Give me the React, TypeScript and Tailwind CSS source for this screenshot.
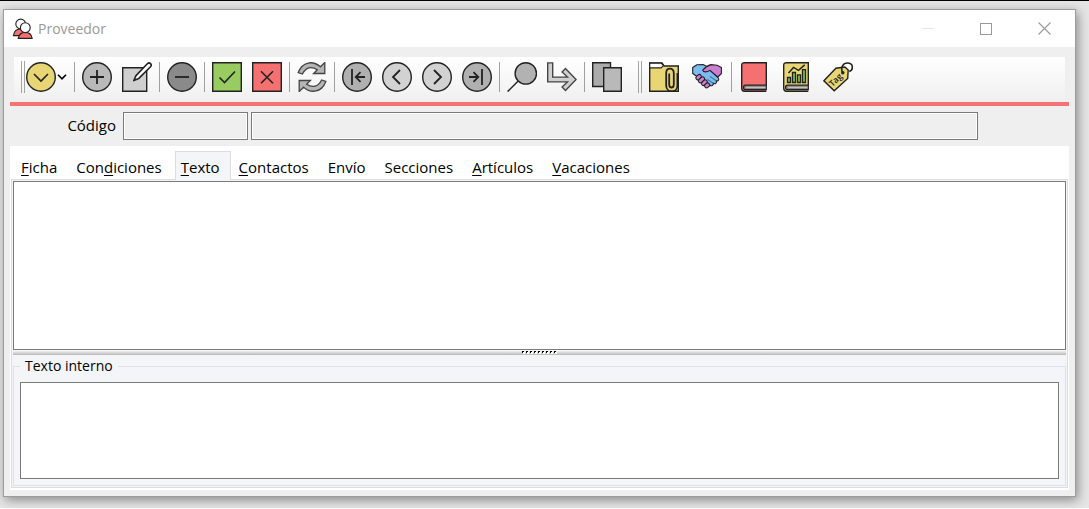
import { useState } from "react";
import type { ReactNode } from "react";

const INK = "#222222";

function Icon({ children }: { children: ReactNode }) {
  return (
    <svg
      viewBox="0 0 30 30"
      className="size-[30px] shrink-0"
      fill="none"
      stroke={INK}
      strokeWidth="1.4"
      aria-hidden="true"
    >
      {children}
    </svg>
  );
}

function ToolButton({ label, children }: { label: string; children: ReactNode }) {
  return (
    <button type="button" aria-label={label} className="flex w-10 shrink-0 items-center justify-center">
      {children}
    </button>
  );
}

function Separator() {
  return (
    <div className="flex w-[5px] shrink-0 justify-center">
      <div className="h-[30px] w-px bg-[#a0a0a0]" />
    </div>
  );
}

function Grip() {
  return <div className="h-8 w-1 shrink-0 border-x border-[#a3a3a3]" />;
}

function Disc({ fill, children }: { fill: string; children: ReactNode }) {
  return (
    <Icon>
      <circle cx="15" cy="15" r="14.3" fill={fill} />
      {children}
    </Icon>
  );
}

function HandshakeIcon() {
  return (
    <Icon>
      <g strokeWidth="1.1" strokeLinejoin="round">
        <path
          d="M.7 5.5 5 2.8 11 2.6 14 4 19 9 26 15.5 C28 18 25.5 19.5 24.3 18.7 C25.3 21.4 22.6 22.4 21.3 21.2 C21.6 23.6 19.3 24.4 17.8 23.2 C17 25 15.5 24.5 14 23 L5 14.5 .7 11.5Z"
          fill="#7cbcf0"
        />
        <path
          d="M29.4 5.5 25 3.2 19 2.6 C15 3.6 13 5.5 10.7 8.2 C11.5 10.4 14.5 10.5 18 8.4 L25.8 15 29.4 11.5Z"
          fill="#cc7fd2"
        />
        <path d="m18 14.5 6.3 4.2M15.5 17.5l5.8 3.7" stroke="#45779f" />
        <rect x="3.6" y="13.2" width="6" height="4" rx="2" fill="#cc7fd2" transform="rotate(-42 6.6 15.2)" />
        <rect x="6" y="15.9" width="7" height="4" rx="2" fill="#cc7fd2" transform="rotate(-42 9.5 17.9)" />
        <rect x="9.2" y="18.7" width="6.4" height="4" rx="2" fill="#cc7fd2" transform="rotate(-42 12.4 20.7)" />
        <rect x="12.4" y="21.4" width="5.4" height="4" rx="2" fill="#cc7fd2" transform="rotate(-42 15.1 23.4)" />
      </g>
    </Icon>
  );
}

function BookIcon({ cover, children }: { cover: string; children?: ReactNode }) {
  return (
    <Icon>
      <path d="M27.3 29.3H5.5C3.5 29.3 2.7 28 2.7 26V3.2C2.7 1.5 3.8.7 5.5.7h21.8v22.6" fill={cover} />
      <path d="M27.3 23.2H6.5c-2.6 0-2.6 4.4 0 4.4h20.8z" fill="#8a8a8a" strokeWidth="1.2" />
      <path d="M7 25.4h19.5" stroke="#c9c9c9" strokeWidth="1" />
      {children}
    </Icon>
  );
}

function Toolbar() {
  return (
    <div
      role="toolbar"
      aria-label="Acciones"
      className="flex h-[43px] items-center bg-linear-to-b from-white to-[#f0f0f0] pb-[3px] pl-[7px]"
    >
      <Grip />
      <button type="button" aria-label="Menú" className="ml-px flex shrink-0 items-center">
        <Disc fill="#e8d574">
          <path d="m8 12 7 7 7-7" strokeWidth="1.6" />
        </Disc>
        <svg viewBox="0 0 10 6" className="mx-1 ml-px h-1.5 w-2.5" fill="none" stroke="#000" strokeWidth="1.6" aria-hidden="true">
          <path d="m1 .8 4 4 4-4" />
        </svg>
      </button>
      <div className="ml-px flex">
        <Separator />
      </div>
      <ToolButton label="Nuevo">
        <Disc fill="#b9b9b9">
          <path d="M15 8v14M8 15h14" strokeWidth="1.8" />
        </Disc>
      </ToolButton>
      <ToolButton label="Editar">
        <Icon>
          <path d="M.7 5.7h24v23.6H.7z" fill="#cfcfcf" />
          <path d="m11.8 18.6 2.2-5L25.3 1.8c2.4-2.2 5.2.8 3.2 3L16.8 16.4z" fill="#fff" strokeWidth="1.6" strokeLinejoin="round" />
        </Icon>
      </ToolButton>
      <Separator />
      <ToolButton label="Eliminar">
        <Disc fill="#8a8a8a">
          <path d="M8 15h14" strokeWidth="1.8" />
        </Disc>
      </ToolButton>
      <Separator />
      <ToolButton label="Aceptar">
        <Icon>
          <path d="M.7.7h28.6v28.6H.7z" fill="#98cc60" />
          <path d="m7.5 15.5 5 5L23 9.5" strokeWidth="1.6" />
        </Icon>
      </ToolButton>
      <ToolButton label="Cancelar">
        <Icon>
          <path d="M.7.7h28.6v28.6H.7z" fill="#f57070" />
          <path d="m9 9.3 12 12m0-12-12 12" strokeWidth="1.6" />
        </Icon>
      </ToolButton>
      <Separator />
      <ToolButton label="Actualizar">
        <Icon>
          <g fill="#b5b5b5" stroke="#444" strokeWidth="1.3">
            <path d="M1.2 10.6C5.5-.8 16-1.6 23.4 4.8l4.4-4.3v11H16.6l3.7-3.7C14.7 4 8.9 4.9 5.4 12z" />
            <path d="M28.8 19.4C24.5 30.8 14 31.6 6.6 25.2l-4.4 4.3v-11h11.2l-3.7 3.7c5.6 3.8 11.4 2.9 14.9-4.2z" />
          </g>
        </Icon>
      </ToolButton>
      <Separator />
      <ToolButton label="Primero">
        <Disc fill="#b0b0b0">
          <path d="M10 7v16M23 15h-9M18.5 10.2 13.7 15l4.8 4.8" strokeWidth="1.8" />
        </Disc>
      </ToolButton>
      <ToolButton label="Anterior">
        <Disc fill="#d2d2d2">
          <path d="m18 8-7 7 7 7" strokeWidth="1.8" />
        </Disc>
      </ToolButton>
      <ToolButton label="Siguiente">
        <Disc fill="#d2d2d2">
          <path d="m12 8 7 7-7 7" strokeWidth="1.8" />
        </Disc>
      </ToolButton>
      <ToolButton label="Último">
        <Disc fill="#b0b0b0">
          <path d="M20 7v16M7 15h9m-4.5-4.8 4.8 4.8-4.8 4.8" strokeWidth="1.8" />
        </Disc>
      </ToolButton>
      <Separator />
      <ToolButton label="Buscar">
        <Icon>
          <circle cx="18.8" cy="11.4" r="10.7" fill="#b2b2b2" />
          <path d="M11.2 19 .6 29.6" />
        </Icon>
      </ToolButton>
      <ToolButton label="Ir a">
        <Icon>
          <path
            d="M.7.9h5v14.2h14.8l-5.4-5.2 3.4-3.4 10.6 11-10.6 11-3.4-3.4 5.4-5.2H.7z"
            fill="#cfcfcf"
            stroke="#444"
          />
        </Icon>
      </ToolButton>
      <Separator />
      <ToolButton label="Copiar">
        <Icon>
          <path d="M.7.7h17.8v23.8H.7z" fill="#ababab" />
          <path d="M11.7 5.7h17.6v23.6H11.7z" fill="#b9b9b9" />
        </Icon>
      </ToolButton>
      <div className="ml-[11px] flex items-center">
        <Grip />
      </div>
      <div className="mx-[2px] flex gap-[3px]">
        <ToolButton label="Documentos">
          <Icon>
            <path d="M.7.9v28.4h28.6V4H15l-2-3.1z" fill="#e8d574" />
            <path d="M.7 1.2h11.5l2.3 2.2-2.3 2.5H.7z" fill="#fff" strokeWidth="1.2" />
            <path
              d="M20.2 11.5v11c0 4 4.6 4 4.6 0V11c0-5.8-7.6-5.8-7.6 0v12.4c0 8 11.2 8 11.2 0V11"
              strokeWidth="1.8"
            />
          </Icon>
        </ToolButton>
        <ToolButton label="Contactos comerciales">
          <HandshakeIcon />
        </ToolButton>
      </div>
      <Separator />
      <div className="flex gap-[2px]">
        <ToolButton label="Libro">
          <BookIcon cover="#f57070" />
        </ToolButton>
        <ToolButton label="Estadísticas">
          <BookIcon cover="#e8d574">
            <g fill="#7cc04e" strokeWidth="1.3">
              <path d="M6.5 15.5h3v5h-3zM11.5 10.5h3v10h-3zM16.5 12.8h3v7.7h-3zM21.5 7.7h3v12.8h-3z" />
            </g>
            <path d="m7.5 11 5-5.5 5 2.8 6.2-5.4" />
          </BookIcon>
        </ToolButton>
        <ToolButton label="Etiqueta">
          <Icon>
            <path d="m.9 18.8 12-12.6 9-1.2 3.3 3-.5 8.4L11.2 28.8z" fill="#e8d574" />
            <path d="M19.8 10.8C16.8 5.4 20.3 1 24.6 1c5.6 0 6.4 6.5 1.7 8.5" strokeWidth="1.6" />
            <circle cx="19.8" cy="10.8" r="1.7" fill={INK} stroke="none" />
            <text
              x="12.5"
              y="20.8"
              textAnchor="middle"
              transform="rotate(-44 12.5 17.8)"
              fill={INK}
              stroke="none"
              fontFamily="Open Sans, sans-serif"
              fontSize="8.5"
              fontWeight="600"
            >
              Tag
            </text>
          </Icon>
        </ToolButton>
      </div>
    </div>
  );
}

function TitleBar() {
  return (
    <header className="flex h-[37px] items-center bg-white pr-[24px] pl-2">
      <svg viewBox="0 0 22 22" className="size-[22px]" stroke={INK} strokeWidth="1.1" aria-hidden="true">
        <path d="M1.4 17.6C2 13.5 4.5 11 8 11c3 0 5 2 5.6 6.6z" fill="#f57070" />
        <circle cx="8.7" cy="6" r="4.9" fill="#fff" />
        <path d="M6.2 20.4c.8-4 3.6-6 7-6s6.3 2 7 6z" fill="#f57070" />
        <circle cx="13.3" cy="9.7" r="4.9" fill="#fff" />
      </svg>
      <h1 className="ml-1 flex-1 text-sm leading-5 text-[#999999]">Proveedor</h1>
      <div className="flex items-center gap-[46px]">
        <button type="button" aria-label="Minimizar" className="flex h-3 items-center">
          <span className="h-px w-3 bg-[#e6e6e6]" />
        </button>
        <button type="button" aria-label="Maximizar" className="size-3 border border-[#999999]" />
        <button type="button" aria-label="Cerrar">
          <svg viewBox="0 0 13 13" className="size-[13px]" stroke="#999" strokeWidth="1.1" aria-hidden="true">
            <path d="m.5.5 12 12m0-12-12 12" />
          </svg>
        </button>
      </div>
    </header>
  );
}

const TABS = [
  { name: "Ficha", key: 0 },
  { name: "Condiciones", key: 3 },
  { name: "Texto", key: 0 },
  { name: "Contactos", key: 0 },
  { name: "Envío", key: -1 },
  { name: "Secciones", key: -1 },
  { name: "Artículos", key: 0 },
  { name: "Vacaciones", key: 0 },
];

function TabLabel({ name, accessKey }: { name: string; accessKey: number }) {
  if (accessKey < 0) return <>{name}</>;
  return (
    <>
      {name.slice(0, accessKey)}
      <span className="underline decoration-1 underline-offset-2">{name[accessKey]}</span>
      {name.slice(accessKey + 1)}
    </>
  );
}

export default function App() {
  const [active, setActive] = useState("Texto");

  return (
    <div className="flex min-h-screen flex-col border-t border-b border-t-black border-b-white bg-[#e6e5e6] pt-2 pr-[13px] pb-[11px] pl-[3px] font-['Open_Sans','Noto_Sans',sans-serif] text-[15px] leading-5 text-black">
      <main className="flex flex-1 flex-col border border-[#9c9c9c] bg-[#efefef] shadow-[2px_3px_10px_rgba(0,0,0,0.4)]">
        <TitleBar />
        <div className="px-2.5 pt-2.5">
          <Toolbar />
        </div>
        <div className="flex flex-1 flex-col px-1.5 pb-1.5">
          <div className="mt-[2px] h-1 bg-[#f57272]" />
          <div className="flex items-center py-1.5">
            <label htmlFor="codigo" className="mr-[7px] w-[106px] pb-0.5 text-right">
              Código
            </label>
            <input
              id="codigo"
              type="text"
              className="h-7 w-[125px] border border-[#7a7a7a] bg-[#efefef] px-1 shadow-[inset_0_0_0_1px_#fff] outline-none"
            />
            <input
              aria-label="Nombre"
              type="text"
              className="mr-[91px] ml-[3px] h-7 min-w-0 flex-1 border border-[#7a7a7a] bg-[#efefef] px-1 shadow-[inset_0_0_0_1px_#fff] outline-none"
            />
          </div>
          <section className="flex flex-1 flex-col bg-white px-px pt-[5px] pb-[2px]">
            <div role="tablist" className="-mb-px flex gap-[2px] pl-1">
              {TABS.map((tab) => (
                <button
                  key={tab.name}
                  type="button"
                  role="tab"
                  aria-selected={active === tab.name}
                  onClick={() => setActive(tab.name)}
                  className={
                    "relative h-[29px] border border-b-0 pt-0.5 pr-2.5 pl-[5px] " +
                    (active === tab.name ? "border-[#dcdcdc] bg-[#f4f5f8]" : "border-transparent")
                  }
                >
                  <TabLabel name={tab.name} accessKey={tab.key} />
                </button>
              ))}
            </div>
            <div role="tabpanel" className="flex flex-1 flex-col border border-[#dcdcdc] bg-[#f4f5f8] p-px">
              <textarea
                aria-label="Texto"
                className="min-h-32 flex-1 resize-none border border-[#7a7a7a] bg-white p-1 outline-none"
              />
              <div className="flex h-[5px] items-center justify-center bg-linear-to-b from-white to-[#b9b6b6]">
                <svg viewBox="0 0 36 3" className="h-[3px] w-9" shapeRendering="crispEdges" aria-hidden="true">
                  {[0, 4, 8, 12, 16, 20, 24, 28, 32].map((x) => (
                    <g key={x}>
                      <path d={`M${x + 1} 1h2v2h-2z`} fill="#fff" />
                      <path d={`M${x} 0h2v1h-1v1h-1z`} fill="#000" />
                    </g>
                  ))}
                </svg>
              </div>
              <fieldset className="mt-px border border-[#e0e1e4] px-1.5 pt-1.5 pb-1.5">
                <legend className="px-[5px] text-sm leading-5">Texto interno</legend>
                <textarea
                  aria-label="Texto interno"
                  className="block h-[97px] w-full resize-none border border-[#7a7a7a] bg-white p-1 outline-none"
                />
              </fieldset>
            </div>
          </section>
        </div>
      </main>
    </div>
  );
}
